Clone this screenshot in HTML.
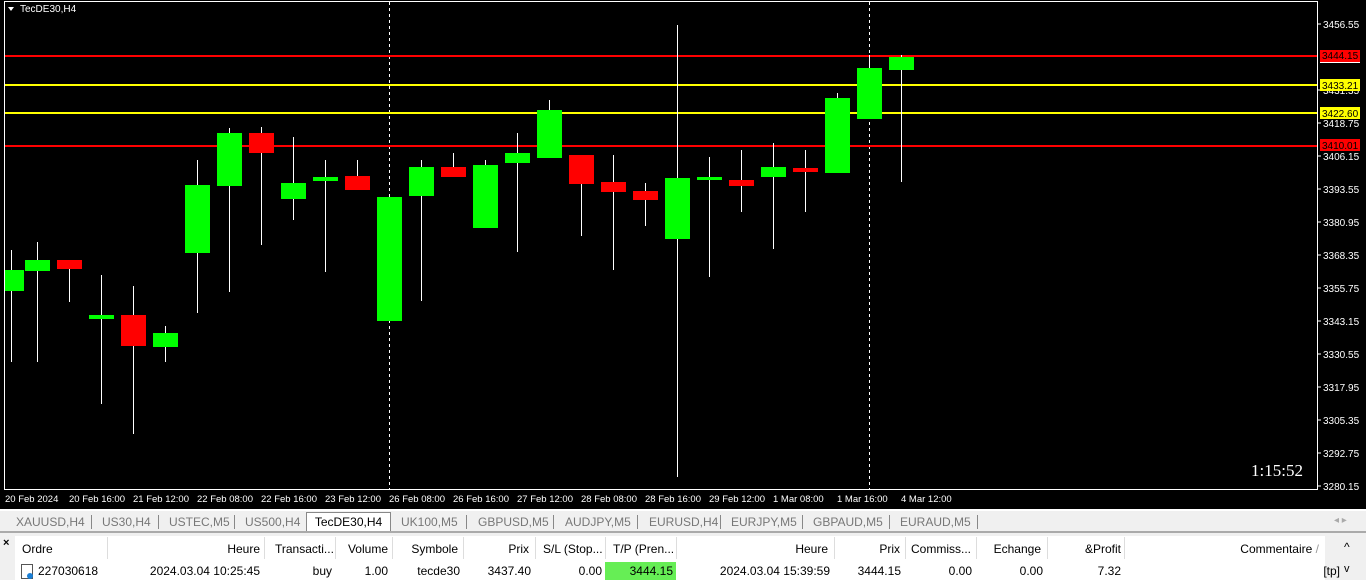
<!DOCTYPE html><html><head><style>
body{margin:0;width:1366px;height:580px;overflow:hidden;background:#f0f0f0;font-family:"Liberation Sans",sans-serif;position:relative}
.t{position:absolute;font-size:11px;white-space:nowrap}
.sep{position:absolute;top:537px;width:1px;height:22px;background:#ddd}
.ts{position:absolute;top:515px;width:1px;height:14px;background:#888}
</style></head><body>
<svg width="1366" height="510" style="position:absolute;left:0;top:0" font-family="Liberation Sans" font-size="10">
<rect width="1366" height="510" fill="#000"/>
<rect x="4.5" y="1.5" width="1313" height="488" fill="none" stroke="#fff"/>
<polygon points="8,7 14,7 11,11" fill="#fff"/>
<text x="20" y="12" fill="#fff" font-size="10">TecDE30,H4</text>
<g stroke="#fff" stroke-dasharray="3,3"><line x1="389.5" y1="2" x2="389.5" y2="489"/><line x1="869.5" y1="2" x2="869.5" y2="489"/></g>
<line x1="5" y1="56" x2="1317" y2="56" stroke="#f00" stroke-width="2"/>
<line x1="5" y1="85" x2="1317" y2="85" stroke="#ff0" stroke-width="2"/>
<line x1="5" y1="113" x2="1317" y2="113" stroke="#ff0" stroke-width="2"/>
<line x1="5" y1="146" x2="1317" y2="146" stroke="#f00" stroke-width="2"/>
<g id="c"></g>
<g fill="#fff" font-size="10">
<text x="1323" y="28">3456.55</text><text x="1323" y="94">3431.35</text><text x="1323" y="127">3418.75</text><text x="1323" y="160">3406.15</text><text x="1323" y="193">3393.55</text><text x="1323" y="226">3380.95</text><text x="1323" y="259">3368.35</text><text x="1323" y="292">3355.75</text><text x="1323" y="325">3343.15</text><text x="1323" y="358">3330.55</text><text x="1323" y="391">3317.95</text><text x="1323" y="424">3305.35</text><text x="1323" y="457">3292.75</text><text x="1323" y="490">3280.15</text>
</g>
<g stroke="#fff"><line x1="1318" y1="24" x2="1321" y2="24"/><line x1="1318" y1="90" x2="1321" y2="90"/><line x1="1318" y1="123" x2="1321" y2="123"/><line x1="1318" y1="156" x2="1321" y2="156"/><line x1="1318" y1="189" x2="1321" y2="189"/><line x1="1318" y1="222" x2="1321" y2="222"/><line x1="1318" y1="255" x2="1321" y2="255"/><line x1="1318" y1="288" x2="1321" y2="288"/><line x1="1318" y1="321" x2="1321" y2="321"/><line x1="1318" y1="354" x2="1321" y2="354"/><line x1="1318" y1="387" x2="1321" y2="387"/><line x1="1318" y1="420" x2="1321" y2="420"/><line x1="1318" y1="453" x2="1321" y2="453"/><line x1="1318" y1="486" x2="1321" y2="486"/></g>
<rect x="1320" y="50" width="40" height="12" fill="#f00"/><rect x="1320" y="62" width="40" height="1" fill="#fff"/><text x="1322" y="59" fill="#000">3444.15</text>
<rect x="1320" y="79" width="40" height="12" fill="#ff0"/><text x="1322" y="89" fill="#000">3433.21</text>
<rect x="1320" y="107" width="40" height="12" fill="#ff0"/><text x="1322" y="117" fill="#000">3422.60</text>
<rect x="1320" y="139" width="40" height="12" fill="#f00"/><text x="1322" y="149" fill="#000">3410.01</text>
<text x="1251" y="476" fill="#fff" font-size="17" font-family="Liberation Serif">1:15:52</text>
<g fill="#fff" font-size="9.5">
<text x="5" y="502">20 Feb 2024</text><text x="69" y="502">20 Feb 16:00</text><text x="133" y="502">21 Feb 12:00</text><text x="197" y="502">22 Feb 08:00</text><text x="261" y="502">22 Feb 16:00</text><text x="325" y="502">23 Feb 12:00</text><text x="389" y="502">26 Feb 08:00</text><text x="453" y="502">26 Feb 16:00</text><text x="517" y="502">27 Feb 12:00</text><text x="581" y="502">28 Feb 08:00</text><text x="645" y="502">28 Feb 16:00</text><text x="709" y="502">29 Feb 12:00</text><text x="773" y="502">1 Mar 08:00</text><text x="837" y="502">1 Mar 16:00</text><text x="901" y="502">4 Mar 12:00</text>
</g>
</svg>
<div style="position:absolute;left:0;top:509px;width:1366px;height:2px;background:#fff"></div>
<div class="t" style="top:515px;left:0;width:1000px;font-size:12px;color:#777">
<span style="position:absolute;left:16px">XAUUSD,H4</span><span style="position:absolute;left:102px">US30,H4</span><span style="position:absolute;left:169px">USTEC,M5</span><span style="position:absolute;left:245px">US500,H4</span><span style="position:absolute;left:401px">UK100,M5</span><span style="position:absolute;left:478px">GBPUSD,M5</span><span style="position:absolute;left:565px">AUDJPY,M5</span><span style="position:absolute;left:649px">EURUSD,H4</span><span style="position:absolute;left:731px">EURJPY,M5</span><span style="position:absolute;left:813px">GBPAUD,M5</span><span style="position:absolute;left:900px">EURAUD,M5</span>
</div>
<div class="ts" style="left:91px"></div><div class="ts" style="left:158px"></div><div class="ts" style="left:234px"></div><div class="ts" style="left:466px"></div><div class="ts" style="left:553px"></div><div class="ts" style="left:637px"></div><div class="ts" style="left:720px"></div><div class="ts" style="left:802px"></div><div class="ts" style="left:889px"></div><div class="ts" style="left:977px"></div>
<div style="position:absolute;left:306px;top:512px;width:83px;height:19px;background:#fff;border:1px solid #888;border-bottom:none;font-size:12px;text-align:center;line-height:19px">TecDE30,H4</div>
<div style="position:absolute;top:531px;left:0;width:1366px;height:2px;background:#aaa"></div>
<div style="position:absolute;top:536px;left:15px;width:1310px;height:24px;background:#fff;border-bottom:1px solid #ddd"></div>
<div style="position:absolute;top:560px;left:15px;width:1310px;height:20px;background:#fff"></div>
<div class="sep" style="left:107px"></div><div class="sep" style="left:264px"></div><div class="sep" style="left:335px"></div><div class="sep" style="left:392px"></div><div class="sep" style="left:463px"></div><div class="sep" style="left:535px"></div><div class="sep" style="left:605px"></div><div class="sep" style="left:676px"></div><div class="sep" style="left:834px"></div><div class="sep" style="left:905px"></div><div class="sep" style="left:976px"></div><div class="sep" style="left:1047px"></div><div class="sep" style="left:1124px"></div>
<div style="position:absolute;top:562px;left:605px;width:71px;height:18px;background:#66ee55"></div>
<div class="t" style="top:537px;left:3px;font-weight:bold;font-size:11px">×</div>
<div class="t" style="top:542px;left:22px;font-size:12px">Ordre</div>
<div class="t" style="top:542px;left:0;width:1340px;font-size:12px">
<span style="position:absolute;right:1080px">Heure</span><span style="position:absolute;left:275px">Transacti...</span><span style="position:absolute;right:952px">Volume</span><span style="position:absolute;right:882px">Symbole</span><span style="position:absolute;right:811px">Prix</span><span style="position:absolute;left:543px">S/L (Stop...</span><span style="position:absolute;left:613px">T/P (Pren...</span><span style="position:absolute;right:512px">Heure</span><span style="position:absolute;right:440px">Prix</span><span style="position:absolute;left:911px">Commiss...</span><span style="position:absolute;right:299px">Echange</span><span style="position:absolute;right:219px">&amp;Profit</span><span style="position:absolute;right:21px">Commentaire <span style="color:#999">/</span></span>
</div>
<div class="t" style="top:564px;left:0;width:1340px;font-size:12px">
<span style="position:absolute;left:38px">227030618</span><span style="position:absolute;right:1080px">2024.03.04 10:25:45</span><span style="position:absolute;right:1008px">buy</span><span style="position:absolute;right:952px">1.00</span><span style="position:absolute;right:880px">tecde30</span><span style="position:absolute;right:809px">3437.40</span><span style="position:absolute;right:738px">0.00</span><span style="position:absolute;right:667px">3444.15</span><span style="position:absolute;right:510px">2024.03.04 15:39:59</span><span style="position:absolute;right:439px">3444.15</span><span style="position:absolute;right:368px">0.00</span><span style="position:absolute;right:297px">0.00</span><span style="position:absolute;right:219px">7.32</span><span style="position:absolute;right:0px">[tp]</span>
</div>
<div style="position:absolute;left:21px;top:564px;width:10px;height:13px;border:1px solid #555;background:#fff"></div>
<div style="position:absolute;left:27px;top:573px;width:6px;height:6px;border-radius:50%;background:#1a7fd6"></div>
<div class="t" style="left:1344px;top:540px;font-size:12px">^</div>
<div class="t" style="left:1344px;top:563px;font-size:11px">v</div>
<div class="t" style="left:1334px;top:515px;color:#aaa;font-size:10px">◂ ▸</div>
<script>
var d=[[11,1,270,291,250,362],[37,1,260,271,242,362],[69,0,260,269,260,302],[101,1,315,319,275,404],[133,0,315,346,286,434],[165,1,333,347,326,362],[197,1,185,253,160,313],[229,1,133,186,128,292],[261,0,133,153,127,245],[293,1,183,199,137,220],[325,1,177,181,160,272],[357,0,176,190,160,190],[389,1,197,321,197,321],[421,1,167,196,160,301],[453,0,167,177,153,177],[485,1,165,228,160,228],[517,1,153,163,133,252],[549,1,110,158,100,158],[581,0,155,184,155,236],[613,0,182,192,155,270],[645,0,191,200,183,226],[677,1,178,239,25,477],[709,1,177,180,157,277],[741,0,180,186,150,212],[773,1,167,177,143,249],[805,0,168,172,150,212],[837,1,98,173,93,173],[869,1,68,119,55,119],[901,1,57,70,55,182]];
var s='';d.forEach(function(c){var col=c[1]?'#00ff00':'#ff0000';s+='<line x1="'+(c[0]+.5)+'" y1="'+c[4]+'" x2="'+(c[0]+.5)+'" y2="'+c[5]+'" stroke="#fff"/>';var x=c[0]-12;if(x<5)x=5;s+='<rect x="'+x+'" y="'+c[2]+'" width="'+(c[0]+13-x)+'" height="'+(c[3]-c[2])+'" fill="'+col+'"/>';});
document.getElementById('c').innerHTML=s;
</script>
</body></html>
